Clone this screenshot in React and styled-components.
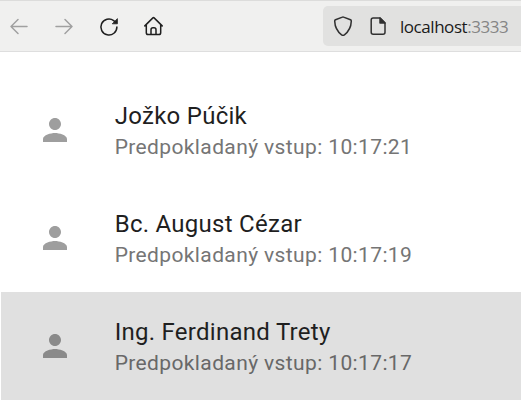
import React from 'react';
import styled, { createGlobalStyle } from 'styled-components';

const GlobalStyle = createGlobalStyle`
  * { box-sizing: border-box; }
  body { margin: 0; background: #fff; overflow: hidden; }
`;

const Page = styled.div`
  width: 521px;
  height: 407px;
  background: #fff;
  overflow: hidden;
`;

const Toolbar = styled.header`
  display: flex;
  align-items: center;
  justify-content: space-between;
  height: 52px;
  padding-left: 7px;
  background: #f0f0ef;
  border-top: 1px solid #dcdcdb;
  border-bottom: 1px solid #dedede;
`;

const Navigation = styled.nav`
  display: flex;
  gap: 21px;
`;

const NavButton = styled.button`
  display: flex;
  width: 24px;
  height: 24px;
  padding: 0;
  border: 0;
  background: none;
  color: ${({ $muted }) => ($muted ? '#a0a0a0' : '#1f1f1f')};
`;

const LineIcon = styled.svg`
  display: block;
  width: 24px;
  height: 24px;
  flex: none;
  fill: none;
  stroke: currentColor;
  stroke-width: 1.5;
  stroke-linecap: round;
  stroke-linejoin: round;
`;

const AddressBar = styled.div`
  display: flex;
  align-items: center;
  width: 198px;
  height: 40px;
  padding-left: 8px;
  gap: 11px;
  border-radius: 5px 0 0 5px;
  background: #e1e1e0;
  color: #303030;
`;

const Address = styled.span`
  margin-left: -1px;
  padding-top: 2px;
  font: 17px/24px "Open Sans", "Noto Sans", sans-serif;
  letter-spacing: -0.45px;
  white-space: nowrap;
  color: #1a1a1a;
`;

const Port = styled.span`
  color: #858585;
`;

const List = styled.ul`
  margin: 24px 0 0 1px;
  padding: 0;
  list-style: none;
`;

const Row = styled.li`
  display: flex;
  align-items: center;
  height: 108px;
  padding-left: 36px;
  gap: 41.7px;
  background: ${({ $selected }) => ($selected ? '#e0e0e0' : '#fff')};
`;

const PersonIcon = styled.svg`
  width: 36px;
  height: 36px;
  flex: none;
  fill: ${({ $selected }) => ($selected ? '#8a8a8a' : '#9e9e9e')};
`;

const Details = styled.div`
  display: flex;
  flex-direction: column;
  padding-top: 2px;
  font-family: Roboto, sans-serif;
  white-space: nowrap;
`;

const Name = styled.span`
  font-size: 24px;
  line-height: 32px;
  letter-spacing: 0.27px;
  color: #1f1f1f;
`;

const Entry = styled.span`
  font-size: 21px;
  line-height: 30px;
  letter-spacing: 0.375px;
  color: ${({ $selected }) => ($selected ? '#686868' : '#757575')};
`;

const people = [
  { name: 'Jožko Púčik', time: '10:17:21' },
  { name: 'Bc. August Cézar', time: '10:17:19' },
  { name: 'Ing. Ferdinand Trety', time: '10:17:17', selected: true },
];

export default function App() {
  return (
    <Page>
      <GlobalStyle />
      <Toolbar>
        <Navigation>
          <NavButton $muted aria-label="Back">
            <LineIcon><path d="M20 12.5H4M11 5.5l-7 7 7 7" /></LineIcon>
          </NavButton>
          <NavButton $muted aria-label="Forward">
            <LineIcon><path d="M4 12.5h16M13 5.5l7 7-7 7" /></LineIcon>
          </NavButton>
          <NavButton aria-label="Reload">
            <LineIcon>
              <path d="M19.9 13a8 8 0 1 1-3.200-6.400L18.200 8" />
              <path d="M20.400 5v4.800h-4.800z" fill="currentColor" strokeWidth=".8" />
            </LineIcon>
          </NavButton>
          <NavButton aria-label="Home">
            <LineIcon>
              <path d="M2.800 11.900l8.100-8q.6-.6 1.200 0l8.100 8M4.300 10.600v8.200q0 1.800 1.800 1.800h10.800q1.800 0 1.800-1.800v-8.200M9 20.600v-4.800q0-2 2-2h1q2 0 2 2v4.800" />
            </LineIcon>
          </NavButton>
        </Navigation>
        <AddressBar>
          <LineIcon>
            <path d="M11.400 3.100q.6-.3 1.200 0l6.900 2.700q.9.4.8 1.300c-.2 5.500-2.300 10.200-6.900 13.700q-1.400 1-2.800 0C6 17.300 3.900 12.600 3.700 7.100q-.1-.9.8-1.300z" />
          </LineIcon>
          <LineIcon>
            <path d="M14 4H7.200q-2 0-2 2v12.200q0 2 2 2h9.800q2 0 2-2V9z" />
            <path d="M14 4v5h5z" fill="currentColor" />
          </LineIcon>
          <Address>localhost<Port>:3333</Port></Address>
        </AddressBar>
      </Toolbar>
      <List>
        {people.map(({ name, time, selected }) => (
          <Row key={time} $selected={selected}>
            <PersonIcon viewBox="0 0 24 24" $selected={selected}>
              <path d="M12 12c2.210 0 4-1.790 4-4s-1.790-4-4-4-4 1.790-4 4 1.790 4 4 4zm0 2c-2.670 0-8 1.340-8 4v2h16v-2c0-2.660-5.330-4-8-4z" />
            </PersonIcon>
            <Details>
              <Name>{name}</Name>
              <Entry $selected={selected}>Predpokladaný vstup: {time}</Entry>
            </Details>
          </Row>
        ))}
      </List>
    </Page>
  );
}
